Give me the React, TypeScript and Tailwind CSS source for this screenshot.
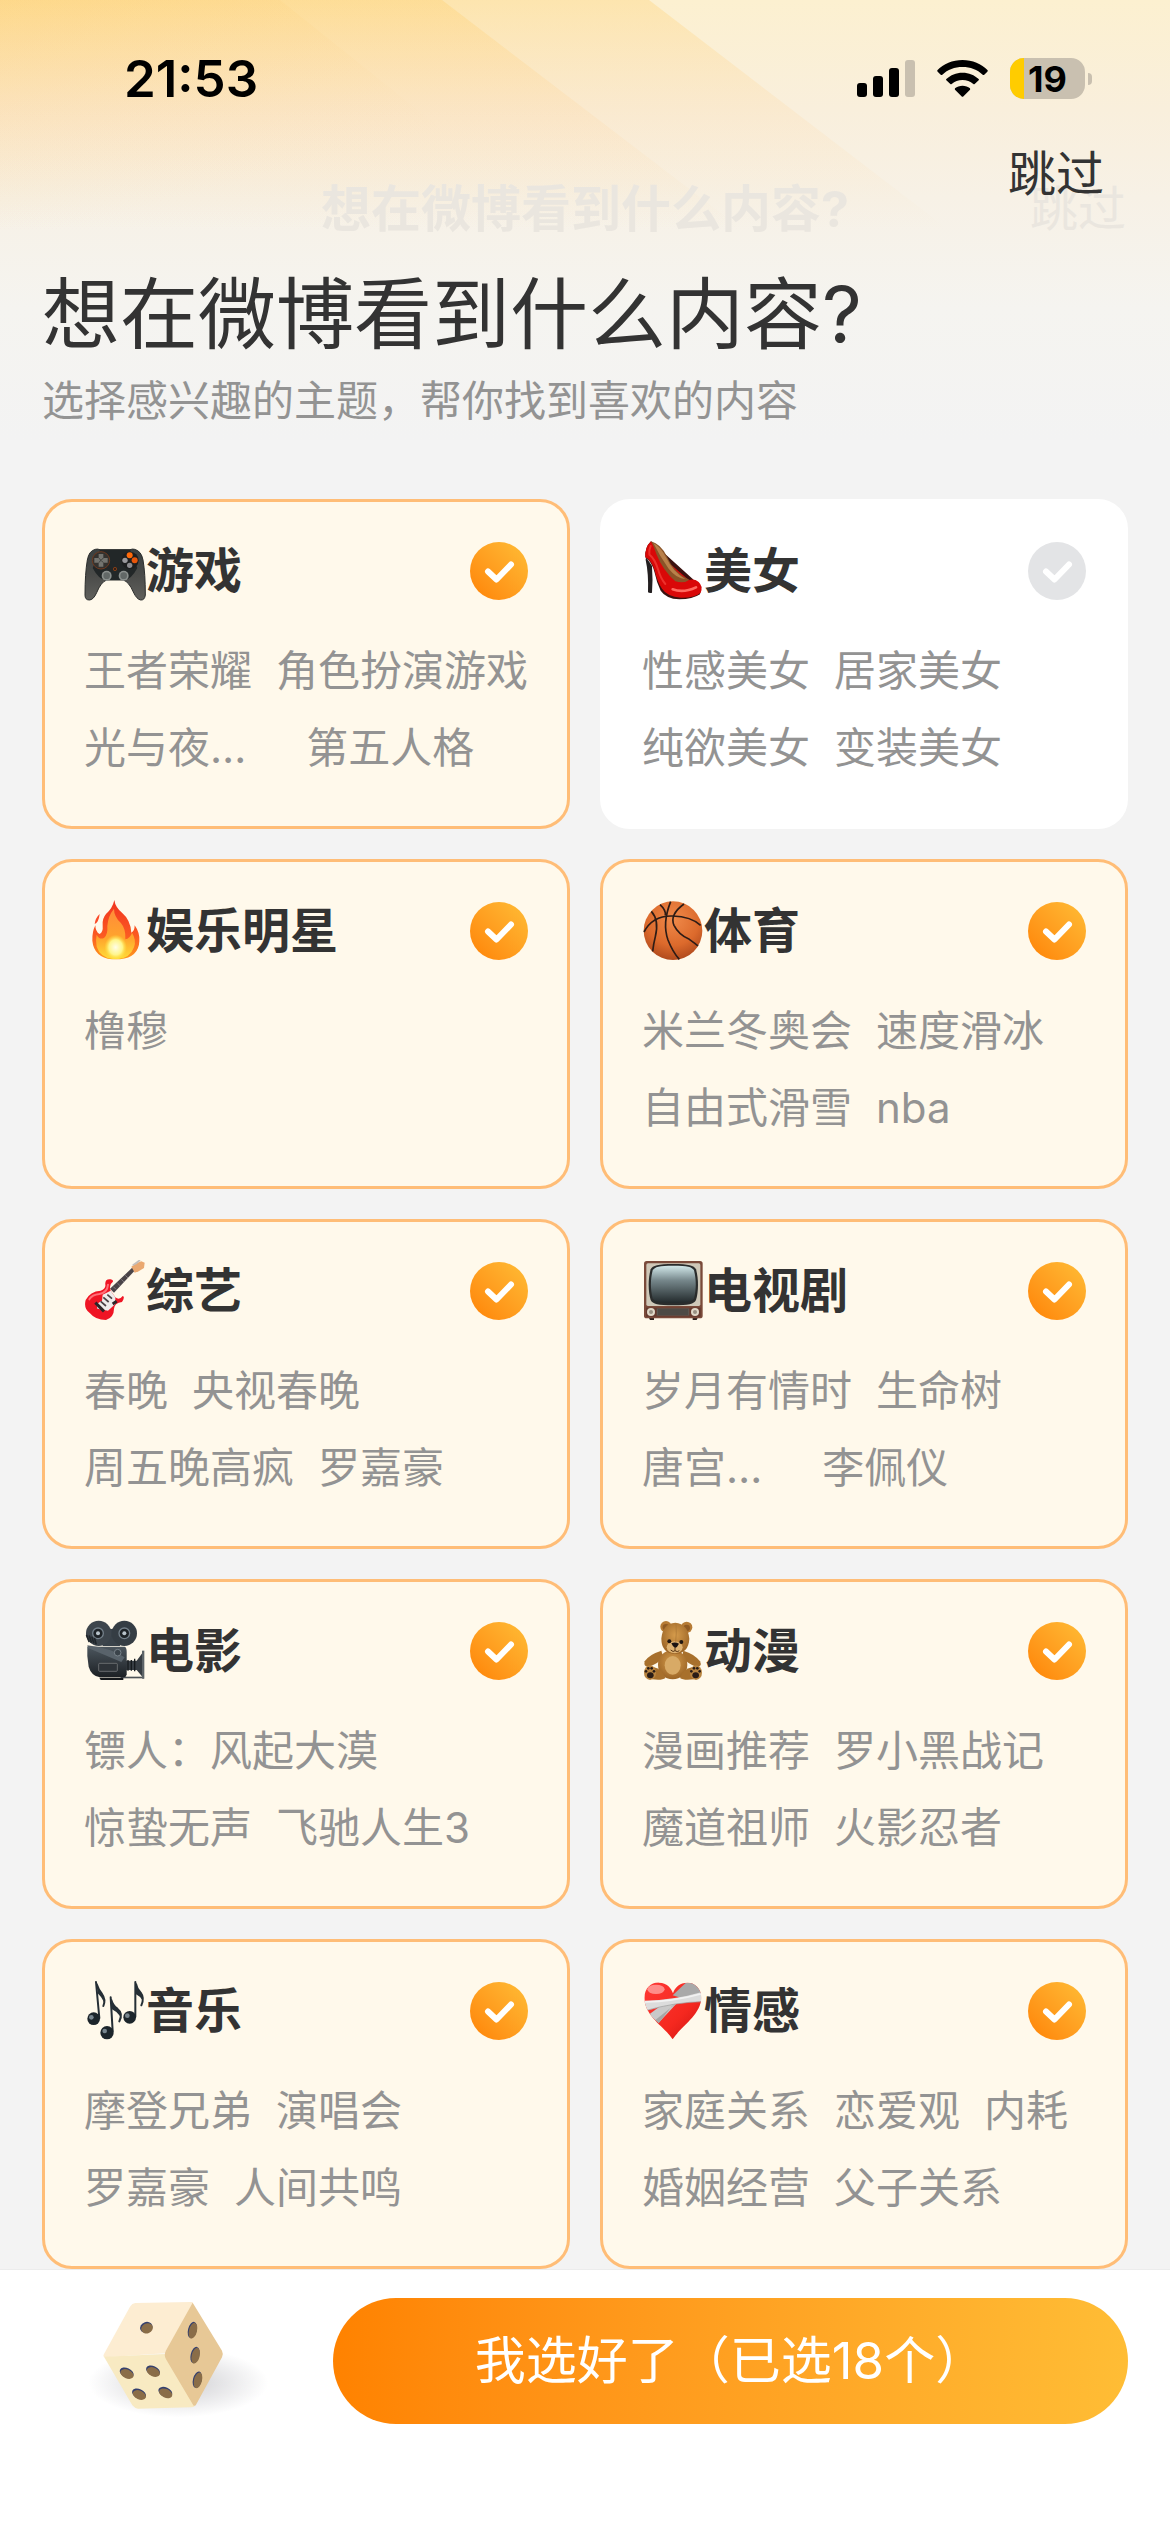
import { useState } from "react";
import type { ReactNode } from "react";

type Tag = { text: string; cut?: boolean };

type Topic = {
  name: string;
  icon: ReactNode;
  rows: Tag[][];
  selected: boolean;
};

function GamepadIcon() {
  return (
    <>
      <defs>
        <linearGradient id="pad" x1="0" y1="0" x2="0" y2="1">
          <stop offset="0" stopColor="#3a4040" />
          <stop offset="0.5" stopColor="#4a4b49" />
          <stop offset="1" stopColor="#60605c" />
        </linearGradient>
      </defs>
      <path
        d="M34 28Q40 26 48 29H138Q146 26 152 28Q172 33 177 60Q184 100 184 165Q182 181 170 180Q158 178 148 156Q135 126 118 120H68Q51 126 38 158Q28 180 16 180Q3 180 3 165Q3 100 10 60Q15 32 34 28Z"
        fill="url(#pad)"
        stroke="#2c2e2d"
        strokeWidth="3"
      />
      <path d="M48 29H138L160 84Q140 122 118 120H68Q46 122 26 84Z" fill="#222728" />
      <circle cx="51" cy="61" r="26" fill="#34322f" stroke="#6e3a20" strokeWidth="3" />
      <path d="M44 42h14v12h13v14H58v12H44V68H31V54h13z" fill="#74746f" />
      <path d="M51 61L44 54M51 61l7-7M51 61l-7 7M51 61l7 7" stroke="#3f403d" strokeWidth="3" />
      <circle cx="138" cy="61" r="26" fill="#1d1f20" />
      <circle cx="137" cy="46" r="9" fill="#ff6a0a" />
      <circle cx="152" cy="61" r="9" fill="#e8560a" />
      <circle cx="123" cy="61" r="8" fill="#9a9a9e" />
      <circle cx="137" cy="76" r="8" fill="#8c8c90" />
      <circle cx="68" cy="107" r="15" fill="#8b908e" />
      <circle cx="68" cy="107" r="10" fill="#626867" />
      <circle cx="119" cy="107" r="15" fill="#8b908e" />
      <circle cx="119" cy="107" r="10" fill="#626867" />
      <circle cx="93" cy="87" r="5" fill="#3a2015" stroke="#a44a16" strokeWidth="2" />
    </>
  );
}

function HeelIcon() {
  return (
    <>
      <path d="M12 52Q18 60 30 78Q33 120 30 158Q24 161 18 157Q20 100 11 60Z" fill="#231f20" />
      <path
        d="M27 4Q8 22 10 52Q30 66 38 98Q44 128 56 152Q72 176 112 178Q152 178 174 163L178 140Z"
        fill="#3a1210"
      />
      <path
        d="M27 4Q8 22 10 52Q28 60 38 92Q46 126 60 146Q76 170 116 173Q158 174 176 158Q184 140 170 126Q158 116 140 120L60 50Z"
        fill="#d90808"
      />
      <path d="M27 4Q56 12 74 48Q96 100 142 119Q126 132 100 124Q62 90 44 44Q36 20 27 4Z" fill="#8a5428" />
      <path d="M34 9Q56 20 72 52Q94 98 130 117Q104 116 80 86Q54 50 34 9Z" fill="#b9804a" />
      <path d="M26 18Q20 30 22 44Q38 56 48 88Q56 116 70 132" fill="none" stroke="#ff5a50" strokeWidth="6" strokeLinecap="round" opacity="0.5" />
      <path d="M92 148Q124 160 162 142" fill="none" stroke="#ff6a60" strokeWidth="8" strokeLinecap="round" />
    </>
  );
}

function FireIcon() {
  return (
    <>
      <defs>
        <linearGradient id="flame" x1="0" y1="0" x2="0" y2="1">
          <stop offset="0" stopColor="#f0331f" />
          <stop offset="0.6" stopColor="#fb5a22" />
          <stop offset="1" stopColor="#ff9a1c" />
        </linearGradient>
        <linearGradient id="flameInner" x1="0" y1="0" x2="0" y2="1">
          <stop offset="0" stopColor="#ff8a3a" />
          <stop offset="0.6" stopColor="#ffa52c" />
          <stop offset="1" stopColor="#ffdc38" />
        </linearGradient>
        <radialGradient id="flameCore">
          <stop offset="0" stopColor="#fffde8" />
          <stop offset="0.6" stopColor="#fff58a" />
          <stop offset="1" stopColor="#ffe33c" stopOpacity="0" />
        </radialGradient>
      </defs>
      <path
        d="M91 0Q94 22 114 38Q140 60 142 98Q152 94 152 76Q168 98 166 124Q164 172 108 178H84Q30 172 25 122Q24 96 34 76Q34 94 46 102Q58 98 56 76Q54 56 66 42Q86 24 91 0Z"
        fill="url(#flame)"
      />
      <path d="M47 42Q34 54 32 72Q44 68 47 42Z" fill="#fb4a28" />
      <path
        d="M90 26Q90 50 110 68Q126 86 124 118Q138 116 144 98Q158 120 150 142Q138 174 104 177H86Q48 172 38 140Q34 120 38 104Q46 120 60 114Q72 104 70 78Q72 48 90 26Z"
        fill="url(#flameInner)"
      />
      <ellipse cx="95" cy="142" rx="34" ry="38" fill="url(#flameCore)" />
    </>
  );
}

function BasketballIcon() {
  return (
    <>
      <defs>
        <radialGradient id="ball" cx="0.5" cy="0.3" r="0.75">
          <stop offset="0" stopColor="#f08a4a" />
          <stop offset="0.6" stopColor="#dc6a2c" />
          <stop offset="1" stopColor="#a8441a" />
        </radialGradient>
      </defs>
      <circle cx="93" cy="92" r="88" fill="url(#ball)" />
      <g fill="none" stroke="#2e1c16" strokeWidth="5">
        <path d="M6 96Q32 46 92 48Q148 50 176 76" />
        <path d="M86 5Q60 70 78 120Q92 156 112 178" />
        <path d="M126 12Q82 44 96 76Q110 104 142 118Q164 134 168 138" />
        <path d="M28 34Q52 60 40 110Q34 134 32 154" />
        <path d="M54 14Q72 30 70 46" />
      </g>
    </>
  );
}

function GuitarIcon() {
  return (
    <>
      <path d="M78 86L146 22L154 30L90 98Z" fill="#4a4448" />
      <path d="M88 80l8 8M100 69l8 8M112 58l8 8M124 46l8 8" stroke="#9a9298" strokeWidth="2" />
      <path d="M142 20L156 10L172 4L182 8L180 24L164 34L152 38Z" fill="#eaa870" />
      <path d="M146 16L168 0M154 12l12-10" stroke="#c4bfbc" strokeWidth="5" />
      <path
        d="M80 58Q62 56 64 74Q66 86 50 92Q18 94 5 120Q-2 146 18 160Q34 180 66 180Q90 172 90 146Q92 128 114 126Q124 110 116 108Q106 122 94 112L80 92Q74 74 86 66Q90 60 80 58Z"
        fill="#ef1524"
      />
      <path d="M16 118Q24 104 46 102Q70 98 72 74" fill="none" stroke="#ff7078" strokeWidth="6" strokeLinecap="round" />
      <path d="M56 104L80 92L94 112L94 132L72 152L40 146L38 132L54 122Z" fill="#efebea" />
      <path d="M58 112l16 14M50 124l16 14M70 104l14 12" stroke="#4a4044" strokeWidth="5" />
      <path d="M34 128l26 26M86 132l12-8" stroke="#2e2628" strokeWidth="9" />
    </>
  );
}

function TvIcon() {
  return (
    <>
      <defs>
        <linearGradient id="screen" x1="0" y1="0" x2="0" y2="1">
          <stop offset="0" stopColor="#d2e8ea" />
          <stop offset="0.4" stopColor="#75868a" />
          <stop offset="1" stopColor="#22292b" />
        </linearGradient>
      </defs>
      <path d="M20 172h16v8H24zM152 172h16l-4 8h-12z" fill="#2c211e" />
      <rect x="6" y="3" width="176" height="172" rx="8" fill="#7a4a3a" />
      <rect x="13" y="10" width="162" height="128" rx="5" fill="#cfc8b8" />
      <path d="M94 12C140 12 156 16 162 28C170 56 170 94 162 120C156 132 140 136 94 136C48 136 32 132 26 120C18 94 18 56 26 28C32 16 48 12 94 12Z" fill="#2a2c2c" />
      <path d="M94 17C136 17 150 20 156 31C163 58 163 90 156 115C150 126 136 129 94 129C52 129 38 126 32 115C25 90 25 58 32 31C38 20 52 17 94 17Z" fill="url(#screen)" />
      <rect x="12" y="143" width="164" height="27" fill="#653a2e" />
      <rect x="44" y="145" width="98" height="22" fill="#5b5650" />
      <path d="M48 150h90M48 156h90M48 162h90" stroke="#353330" strokeWidth="2" />
      <circle cx="27" cy="156" r="12" fill="#dfd8c8" />
      <circle cx="27" cy="156" r="6" fill="#989082" />
      <circle cx="159" cy="156" r="12" fill="#dfd8c8" />
      <circle cx="159" cy="156" r="6" fill="#989082" />
    </>
  );
}

function CameraIcon() {
  return (
    <>
      <defs>
        <linearGradient id="cine" x1="0" y1="0" x2="0" y2="1">
          <stop offset="0" stopColor="#4c565e" />
          <stop offset="1" stopColor="#1c2024" />
        </linearGradient>
      </defs>
      <path d="M110 170h70v5h-70z" fill="#4e5357" />
      <path d="M126 122h32l22-30v84l-22-26h-32z" fill="#373d43" />
      <path d="M132 120v32M142 120v32M152 116v38" stroke="#161a1d" strokeWidth="4" />
      <path d="M174 92h7v84h-7z" fill="#5d6468" />
      <path d="M60 20Q82 34 104 20L108 78H56Z" fill="#39424a" />
      <circle cx="44" cy="40" r="38" fill="#3d454c" />
      <circle cx="121" cy="40" r="38" fill="#353d44" />
      <path d="M10 80H122Q128 82 128 96V164Q126 172 118 172H48Q22 168 14 140Q8 108 10 80Z" fill="url(#cine)" />
      <path d="M10 76Q80 84 122 112L112 126Q60 104 12 84Z" fill="#59636b" />
      <path d="M46 173h72v7H50z" fill="#14171a" />
      <rect x="44" y="130" width="56" height="24" rx="3" fill="#2e3338" stroke="#85888a" strokeWidth="2" />
      <circle cx="42" cy="40" r="16" fill="#1e2327" stroke="#74808a" strokeWidth="4" />
      <circle cx="42" cy="40" r="6" fill="#b8c3ca" />
      <circle cx="121" cy="40" r="16" fill="#1e2327" stroke="#74808a" strokeWidth="4" />
      <circle cx="121" cy="40" r="6" fill="#b8c3ca" />
      <circle cx="101" cy="98" r="10" fill="#3a434a" stroke="#7b858c" strokeWidth="3" />
      <path d="M8 46l7 18M16 48l6 18M24 52l5 16M32 56l4 15" stroke="#20262a" strokeWidth="5" strokeLinecap="round" />
    </>
  );
}

function BearIcon() {
  return (
    <>
      <defs>
        <radialGradient id="fur" cx="0.5" cy="0.4" r="0.6">
          <stop offset="0" stopColor="#d69c4c" />
          <stop offset="1" stopColor="#9c6526" />
        </radialGradient>
      </defs>
      <path d="M58 92Q20 104 8 124Q4 142 20 140Q48 132 64 112Z" fill="#a8702c" />
      <path d="M124 92Q158 102 174 124Q182 142 162 140Q138 132 120 112Z" fill="#a8702c" />
      <ellipse cx="92" cy="134" rx="44" ry="44" fill="url(#fur)" />
      <ellipse cx="92" cy="136" rx="24" ry="28" fill="#d8aa66" />
      <path d="M36 142Q60 146 70 174Q60 182 30 178Z" fill="#a8702c" />
      <path d="M150 142Q124 146 114 174Q124 182 156 178Z" fill="#a8702c" />
      <circle cx="72" cy="20" r="17" fill="#b67b34" />
      <circle cx="72" cy="22" r="10" fill="#8f5a22" />
      <circle cx="134" cy="22" r="17" fill="#b67b34" />
      <circle cx="134" cy="24" r="10" fill="#8f5a22" />
      <path d="M100 8Q138 12 142 56Q140 100 98 102Q58 98 58 56Q62 10 100 8Z" fill="url(#fur)" />
      <ellipse cx="98" cy="82" rx="24" ry="18" fill="#dfb372" />
      <path d="M102 12Q104 38 101 66" fill="none" stroke="#a87434" strokeWidth="2" />
      <circle cx="82" cy="64" r="6" fill="#201610" />
      <circle cx="118" cy="66" r="6" fill="#201610" />
      <path d="M88 70Q99 64 111 71Q106 82 99 84Q92 80 88 70Z" fill="#1c1412" />
      <path d="M99 84v8M86 90Q94 98 99 92Q106 98 112 92" fill="none" stroke="#5a3614" strokeWidth="3" />
      <ellipse cx="24" cy="158" rx="18" ry="22" fill="#b88440" />
      <ellipse cx="162" cy="158" rx="18" ry="22" fill="#b88440" />
      <g fill="#2a1c16">
        <ellipse cx="25" cy="166" rx="10" ry="9" />
        <circle cx="12" cy="154" r="4" />
        <circle cx="19" cy="145" r="4" />
        <circle cx="29" cy="145" r="4" />
        <circle cx="36" cy="154" r="4" />
        <ellipse cx="161" cy="166" rx="10" ry="9" />
        <circle cx="148" cy="154" r="4" />
        <circle cx="156" cy="145" r="4" />
        <circle cx="166" cy="145" r="4" />
        <circle cx="173" cy="154" r="4" />
      </g>
    </>
  );
}

function MusicIcon() {
  return (
    <>
      <g fill="none" stroke="#252f36" strokeWidth="6" strokeLinecap="round" strokeLinejoin="round">
        <path d="M36 6L46 114M38 12Q44 30 54 42Q66 58 58 78" />
        <path d="M80 52L86 154M82 60Q86 76 100 86Q118 100 106 124" />
        <path d="M154 6V110M156 12Q158 26 170 38Q182 54 172 76" />
      </g>
      <path d="M38 12Q44 30 54 42Q62 54 60 66Q52 50 41 40Z" fill="#252f36" />
      <path d="M82 58Q86 76 100 86Q112 96 110 110Q98 94 84 88Z" fill="#252f36" />
      <path d="M155 12Q158 26 170 38Q178 50 176 62Q168 48 155 42Z" fill="#252f36" />
      <circle cx="29" cy="116" r="19" fill="#1c252b" />
      <circle cx="69" cy="158" r="20" fill="#1c252b" />
      <circle cx="137" cy="112" r="19" fill="#1c252b" />
      <circle cx="22" cy="112" r="7" fill="#77858e" />
      <circle cx="62" cy="153" r="7" fill="#77858e" />
      <circle cx="130" cy="107" r="7" fill="#77858e" />
    </>
  );
}

function HeartIcon() {
  return (
    <>
      <defs>
        <linearGradient id="heart" x1="0" y1="0" x2="1" y2="1">
          <stop offset="0" stopColor="#ff3a36" />
          <stop offset="0.6" stopColor="#f5281f" />
          <stop offset="1" stopColor="#c41010" />
        </linearGradient>
        <clipPath id="heartShape">
          <path d="M92 178C70 142 8 110 7 54C8 22 30 6 52 8C74 8 88 24 93 40C98 22 114 8 136 8C160 8 178 26 178 54C176 106 114 142 92 178Z" />
        </clipPath>
      </defs>
      <g clipPath="url(#heartShape)">
        <rect width="186" height="186" fill="url(#heart)" />
        <ellipse cx="42" cy="28" rx="26" ry="14" fill="#ffb4b0" opacity="0.7" />
        <path d="M92 46L130 10Q160 2 186 24L176 40L118 54Z" fill="#a9a9a9" />
        <path d="M108 66L74 64L20 104L50 128Z" fill="#c9c9c9" />
        <path d="M108 66L90 78L50 130L40 120Z" fill="#a6a6a6" />
        <path d="M4 62Q100 60 186 34V64Q100 66 12 92Z" fill="#dcdcdc" />
        <path d="M6 66Q96 64 182 40" fill="none" stroke="#f2f2f2" strokeWidth="5" />
        <path d="M10 92Q100 66 186 65" fill="none" stroke="#9c9c9c" strokeWidth="2" />
      </g>
    </>
  );
}

const topics: Topic[] = [
  {
    name: "游戏",
    icon: <GamepadIcon />,
    rows: [
      [{ text: "王者荣耀" }, { text: "角色扮演游戏" }],
      [{ text: "光与夜…", cut: true }, { text: "第五人格" }],
    ],
    selected: true,
  },
  {
    name: "美女",
    icon: <HeelIcon />,
    rows: [
      [{ text: "性感美女" }, { text: "居家美女" }],
      [{ text: "纯欲美女" }, { text: "变装美女" }],
    ],
    selected: false,
  },
  {
    name: "娱乐明星",
    icon: <FireIcon />,
    rows: [[{ text: "橹穆" }]],
    selected: true,
  },
  {
    name: "体育",
    icon: <BasketballIcon />,
    rows: [
      [{ text: "米兰冬奥会" }, { text: "速度滑冰" }],
      [{ text: "自由式滑雪" }, { text: "nba" }],
    ],
    selected: true,
  },
  {
    name: "综艺",
    icon: <GuitarIcon />,
    rows: [
      [{ text: "春晚" }, { text: "央视春晚" }],
      [{ text: "周五晚高疯" }, { text: "罗嘉豪" }],
    ],
    selected: true,
  },
  {
    name: "电视剧",
    icon: <TvIcon />,
    rows: [
      [{ text: "岁月有情时" }, { text: "生命树" }],
      [{ text: "唐宫…", cut: true }, { text: "李佩仪" }],
    ],
    selected: true,
  },
  {
    name: "电影",
    icon: <CameraIcon />,
    rows: [
      [{ text: "镖人：风起大漠" }],
      [{ text: "惊蛰无声" }, { text: "飞驰人生3" }],
    ],
    selected: true,
  },
  {
    name: "动漫",
    icon: <BearIcon />,
    rows: [
      [{ text: "漫画推荐" }, { text: "罗小黑战记" }],
      [{ text: "魔道祖师" }, { text: "火影忍者" }],
    ],
    selected: true,
  },
  {
    name: "音乐",
    icon: <MusicIcon />,
    rows: [
      [{ text: "摩登兄弟" }, { text: "演唱会" }],
      [{ text: "罗嘉豪" }, { text: "人间共鸣" }],
    ],
    selected: true,
  },
  {
    name: "情感",
    icon: <HeartIcon />,
    rows: [
      [{ text: "家庭关系" }, { text: "恋爱观" }, { text: "内耗" }],
      [{ text: "婚姻经营" }, { text: "父子关系" }],
    ],
    selected: true,
  },
];

// topics picked further down the list, outside of the visible ones
const PICKED_BELOW = 9;

function StatusBar() {
  return (
    <div className="flex h-[141px] items-center justify-between pt-4 pr-[78px] pl-[124px]">
      <span className="text-[51px] leading-none font-semibold text-black">21:53</span>
      <div className="flex items-center gap-[22px]">
        <svg className="h-[37px] w-[58px]" viewBox="0 0 58 37" aria-hidden="true">
          <rect x="0" y="23" width="10" height="14" rx="3" />
          <rect x="16" y="16" width="10" height="21" rx="3" />
          <rect x="32" y="8" width="10" height="29" rx="3" />
          <rect x="48" y="0" width="10" height="37" rx="3" fill="#c9c0b0" />
        </svg>
        <svg className="h-[37px] w-[51px]" viewBox="0 0 153 111" aria-hidden="true">
          <path d="M76.500 0C106 0 134 12 152 31Q153 33 151 35L141 45Q139 46 137 44C121 29 100 21 76.500 21C53 21 32 29 16 44Q14 46 12 45L2 35Q0 33 1 31C19 12 47 0 76.500 0Z" />
          <path d="M76.500 38C96 38 112 45 125 57Q127 59 125 61L113 72Q111 74 109 72C100 64 89 60 76.500 60C64 60 53 64 44 72Q42 74 40 72L28 61Q26 59 28 57C41 45 57 38 76.500 38Z" />
          <path d="M76.500 77C85 77 93 80 99 85Q100 87 99 89L78 110Q76.500 111 75 110L54 89Q53 87 54 85C60 80 68 77 76.500 77Z" />
        </svg>
        <div className="flex items-center gap-[3px]">
          <div className="flex h-[41px] w-[75px] items-center overflow-hidden rounded-[14px] bg-[#c9c0b0]">
            <div className="h-full w-[14px] bg-[#ffcc00]" />
            <span className="pl-1 text-[36px] leading-none font-bold text-black">19</span>
          </div>
          <div className="h-3 w-1 rounded-r-full bg-[#c9c0b0]" />
        </div>
      </div>
    </div>
  );
}

function Backdrop() {
  return (
    <svg
      className="absolute inset-x-0 top-0 h-[440px] w-full"
      viewBox="0 0 1170 440"
      preserveAspectRatio="none"
      aria-hidden="true"
    >
      <defs>
        <linearGradient id="sky" x1="0" y1="0" x2="0" y2="1">
          <stop offset="0" stopColor="#fcf0d0" />
          <stop offset="0.25" stopColor="#f9efdc" />
          <stop offset="0.45" stopColor="#f7f1e6" />
          <stop offset="0.7" stopColor="#f5f4f0" />
          <stop offset="1" stopColor="#f3f3f3" />
        </linearGradient>
        <linearGradient id="ray" gradientUnits="userSpaceOnUse" x1="0" y1="0" x2="0" y2="230">
          <stop offset="0" stopColor="#ffcb60" stopOpacity="0.3" />
          <stop offset="0.5" stopColor="#ffcf90" stopOpacity="0.16" />
          <stop offset="1" stopColor="#ffd8a0" stopOpacity="0" />
        </linearGradient>
        <linearGradient id="glow" gradientUnits="userSpaceOnUse" x1="0" y1="0" x2="60" y2="230">
          <stop offset="0" stopColor="#ffc860" stopOpacity="0.22" />
          <stop offset="1" stopColor="#ffd8a0" stopOpacity="0" />
        </linearGradient>
      </defs>
      <rect width="1170" height="440" fill="url(#sky)" />
      <path d="M0 0H649L949 230H0Z" fill="url(#ray)" />
      <path d="M0 0H442L743 230H0Z" fill="url(#ray)" />
      <path d="M0 0H280L568 230H0Z" fill="url(#glow)" />
    </svg>
  );
}

function TopicCard({ topic, onToggle }: { topic: Topic; onToggle: () => void }) {
  return (
    <label
      className={`flex min-h-[330px] cursor-pointer flex-col rounded-[30px] border-[3px] px-[39px] pt-[38px] ${
        topic.selected ? "border-[#ffbd77] bg-[#fff9eb]" : "border-white bg-white"
      }`}
    >
      <span className="flex items-center justify-between">
        <span className="flex items-center">
          <svg className="size-[62px]" viewBox="0 0 186 186" aria-hidden="true">
            {topic.icon}
          </svg>
          <span className="text-[48px] leading-[62px] font-bold text-[#333333]">{topic.name}</span>
        </span>
        <span className="relative size-[58px]">
          <input
            type="checkbox"
            checked={topic.selected}
            onChange={onToggle}
            className="block size-full appearance-none rounded-full bg-[#e3e4e6] checked:bg-linear-to-tr checked:from-[#ff8200] checked:to-[#ffbd35]"
          />
          <svg
            className="pointer-events-none absolute inset-0 size-full"
            viewBox="0 0 58 58"
            fill="none"
            stroke="#ffffff"
            strokeWidth="6"
            strokeLinecap="round"
            strokeLinejoin="round"
            aria-hidden="true"
          >
            <path d="M18 29.500L26.500 37.500L41 22.500" />
          </svg>
        </span>
      </span>
      <span className="mt-[30px] flex flex-col text-[42px] leading-[77px] whitespace-nowrap text-[#939393]">
        {topic.rows.map((row, i) => (
          <span key={i} className="flex gap-6">
            {row.map((tag) => (
              <span key={tag.text} className={tag.cut ? "pr-9" : ""}>
                {tag.text}
              </span>
            ))}
          </span>
        ))}
      </span>
    </label>
  );
}

function Dice() {
  return (
    <svg className="h-[124px] w-[185px]" viewBox="45 84 555 372" aria-hidden="true">
      <defs>
        <radialGradient id="shade">
          <stop offset="0" stopColor="#cfcfd2" />
          <stop offset="0.5" stopColor="#e6e6e8" />
          <stop offset="1" stopColor="#ffffff" />
        </radialGradient>
      </defs>
      <ellipse cx="325" cy="338" rx="270" ry="104" fill="url(#shade)" />
      <path d="M196 99L364 96Q372 97 368 104L284 250L106 262Q97 261 102 252L180 110Q186 100 196 99Z" fill="#fdedd2" />
      <path d="M102 260L284 252L374 408Q372 412 364 412L204 416Q194 415 187 406Z" fill="#f8eac2" />
      <path d="M368 98L456 242Q461 252 456 262L378 404Q373 411 369 404L288 268Q281 256 287 243Z" fill="#e7c896" />
      <g fill="#35406e">
        <ellipse cx="229" cy="172" rx="19" ry="16" transform="rotate(-22 229 172)" />
        <ellipse cx="367" cy="180" rx="13" ry="25" transform="rotate(14 367 180)" />
        <ellipse cx="375" cy="255" rx="13" ry="25" transform="rotate(14 375 255)" />
        <ellipse cx="382" cy="329" rx="13" ry="25" transform="rotate(14 382 329)" />
        <ellipse cx="170" cy="308" rx="22" ry="14" transform="rotate(24 170 308)" />
        <ellipse cx="249" cy="302" rx="22" ry="14" transform="rotate(24 249 302)" />
        <ellipse cx="207" cy="371" rx="22" ry="14" transform="rotate(24 207 371)" />
        <ellipse cx="286" cy="366" rx="22" ry="14" transform="rotate(24 286 366)" />
      </g>
      <g fill="#8a6d48">
        <ellipse cx="231" cy="175" rx="18" ry="15" transform="rotate(-22 231 175)" />
        <ellipse cx="369" cy="182" rx="12" ry="24" transform="rotate(14 369 182)" />
        <ellipse cx="377" cy="257" rx="12" ry="24" transform="rotate(14 377 257)" />
        <ellipse cx="384" cy="331" rx="12" ry="24" transform="rotate(14 384 331)" />
        <ellipse cx="171" cy="312" rx="21" ry="13" transform="rotate(24 171 312)" />
        <ellipse cx="250" cy="306" rx="21" ry="13" transform="rotate(24 250 306)" />
        <ellipse cx="208" cy="375" rx="21" ry="13" transform="rotate(24 208 375)" />
        <ellipse cx="287" cy="370" rx="21" ry="13" transform="rotate(24 287 370)" />
      </g>
    </svg>
  );
}

export default function App() {
  const [list, setList] = useState(topics);
  const count = list.filter((topic) => topic.selected).length + PICKED_BELOW;

  const toggle = (index: number) => {
    setList(list.map((topic, i) => (i === index ? { ...topic, selected: !topic.selected } : topic)));
  };

  return (
    <main className="flex min-h-screen flex-col bg-[#f3f3f3] font-['Inter','Noto_Sans_CJK_SC',sans-serif]">
      <div className="relative flex-1">
        <Backdrop />
        <div className="relative">
          <StatusBar />
          <div className="relative flex h-[132px] items-center justify-center pt-1 text-[#eae6df]">
            <span className="text-[50px] font-bold">想在微博看到什么内容?</span>
            <span className="absolute right-11 text-[48px]">跳过</span>
            <button type="button" className="absolute -top-0.5 right-[66px] text-[48px] leading-[70px] text-[#333333]">
              跳过
            </button>
          </div>
          <header className="px-[42px]">
            <h1 className="text-[78px] leading-[84px] text-[#333333]">想在微博看到什么内容?</h1>
            <p className="mt-3 text-[42px] leading-[64px] text-[#939393]">选择感兴趣的主题，帮你找到喜欢的内容</p>
          </header>
          <section className="mt-[66px] grid grid-cols-2 gap-[30px] px-[42px]">
            {list.map((topic, i) => (
              <TopicCard key={topic.name} topic={topic} onToggle={() => toggle(i)} />
            ))}
          </section>
        </div>
      </div>
      <footer className="relative flex items-start border-t border-[#ececec] bg-white pt-7 pr-[42px] pb-[108px] pl-[85px]">
        <button type="button" aria-label="随机选择" className="mr-[63px]">
          <Dice />
        </button>
        <button
          type="button"
          className="h-[126px] flex-1 rounded-full bg-linear-to-r from-[#ff8200] to-[#ffbd35] text-[51px] text-white"
        >
          我选好了（已选{count}个）
        </button>
      </footer>
    </main>
  );
}
